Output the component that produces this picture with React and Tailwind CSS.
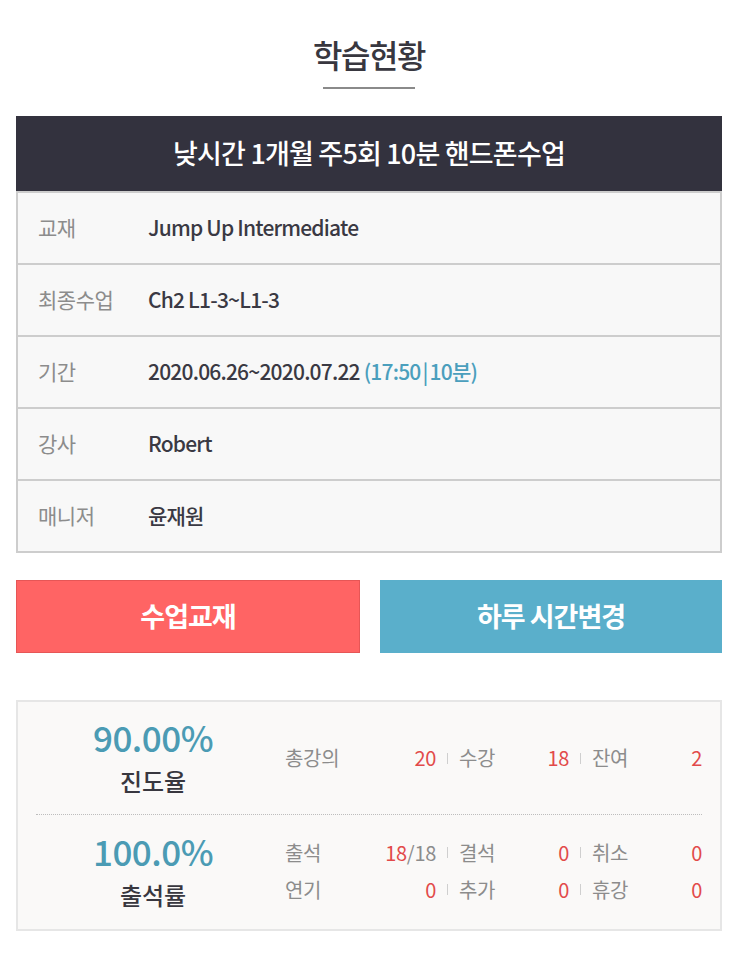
import React from "react";

const infoRows = [
  { label: "교재", value: "Jump Up Intermediate" },
  { label: "최종수업", value: "Ch2 L1-3~L1-3" },
  {
    label: "기간",
    value: (
      <>
        2020.06.26~2020.07.22{" "}
        <span className="text-[#4b9fbd]">
          (17:50<span className="mx-[2px]">|</span>10분)
        </span>
      </>
    ),
  },
  { label: "강사", value: "Robert" },
  { label: "매니저", value: "윤재원" },
];

const Sep = () => (
  <div className="flex justify-center items-center">
    <span className="block w-px h-[11px] bg-[#cfcfcf]" />
  </div>
);

const Cell = ({ label, value, sub }) => (
  <div className="flex justify-between items-center">
    <span className="text-[#8c8c8c]">{label}</span>
    <span className="text-[#e24a4a]">
      {value}
      {sub && <span className="text-[#8c8c8c]">{sub}</span>}
    </span>
  </div>
);

const StatRow = ({ cells }) => (
  <div className="grid grid-cols-[151px_23px_110px_23px_110px] text-[20px] leading-none tracking-[-0.3px]">
    <Cell {...cells[0]} />
    <Sep />
    <Cell {...cells[1]} />
    <Sep />
    <Cell {...cells[2]} />
  </div>
);

const Rate = ({ value, label }) => (
  <div className="w-[234px] flex flex-col items-center -mt-[4px]">
    <div className="text-[35px] leading-none font-medium text-[#4b9bb4] tracking-[-0.5px]">{value}</div>
    <div className="mt-[15px] text-[24px] leading-none font-medium text-[#38373f]">{label}</div>
  </div>
);

export default function App() {
  return (
    <div className="w-[735px] min-h-[960px] bg-white font-['Noto_Sans_CJK_KR','Noto_Sans',sans-serif] pl-4 pr-[13px] pt-[34px]">
      <div className="flex flex-col items-center">
        <h1 className="text-[32px] leading-[40px] font-medium text-[#38373f] tracking-[-1.5px]">학습현황</h1>
        <div className="mt-[13px] w-[92px] h-[2px] bg-[#8a8a8a]" />
      </div>

      <div className="mt-[27px]">
        <div className="h-[75px] bg-[#33323e] flex items-center justify-center text-white text-[27px] font-medium tracking-[-0.8px]">
          낮시간 1개월 주5회 10분 핸드폰수업
        </div>
        <div className="border-x-2 border-b-2 border-[#cdcdcd] bg-[#f8f8f8]">
          {infoRows.map((row) => (
            <div key={row.label} className="h-[72px] border-t-2 border-[#cdcdcd] flex items-center pl-5">
              <div className="w-[110px] text-[21px] text-[#8c8c8c] tracking-[-0.5px]">{row.label}</div>
              <div className="text-[21px] font-medium text-[#3a3943] tracking-[-0.8px]">{row.value}</div>
            </div>
          ))}
        </div>
      </div>

      <div className="mt-[27px] flex gap-5">
        <button className="flex-1 h-[73px] bg-[#ff6464] border border-[#e65656] text-white text-[27px] font-bold tracking-[-1px]">
          수업교재
        </button>
        <button className="flex-1 h-[73px] bg-[#5aafcb] text-white text-[27px] font-bold tracking-[-1px]">
          하루 시간변경
        </button>
      </div>

      <div className="mt-[47px] border-2 border-[#e6e6e6] bg-[#faf9f8] px-[18px]">
        <div className="h-[113px] flex items-center border-b border-dotted border-[#bdbdbd]">
          <Rate value="90.00%" label="진도율" />
          <div className="ml-[15px]">
            <StatRow
              cells={[
                { label: "총강의", value: "20" },
                { label: "수강", value: "18" },
                { label: "잔여", value: "2" },
              ]}
            />
          </div>
        </div>
        <div className="h-[114px] flex items-center">
          <Rate value="100.0%" label="출석률" />
          <div className="ml-[15px] flex flex-col gap-[17px] -mt-[2px]">
            <StatRow
              cells={[
                { label: "출석", value: "18", sub: "/18" },
                { label: "결석", value: "0" },
                { label: "취소", value: "0" },
              ]}
            />
            <StatRow
              cells={[
                { label: "연기", value: "0" },
                { label: "추가", value: "0" },
                { label: "휴강", value: "0" },
              ]}
            />
          </div>
        </div>
      </div>
    </div>
  );
}
